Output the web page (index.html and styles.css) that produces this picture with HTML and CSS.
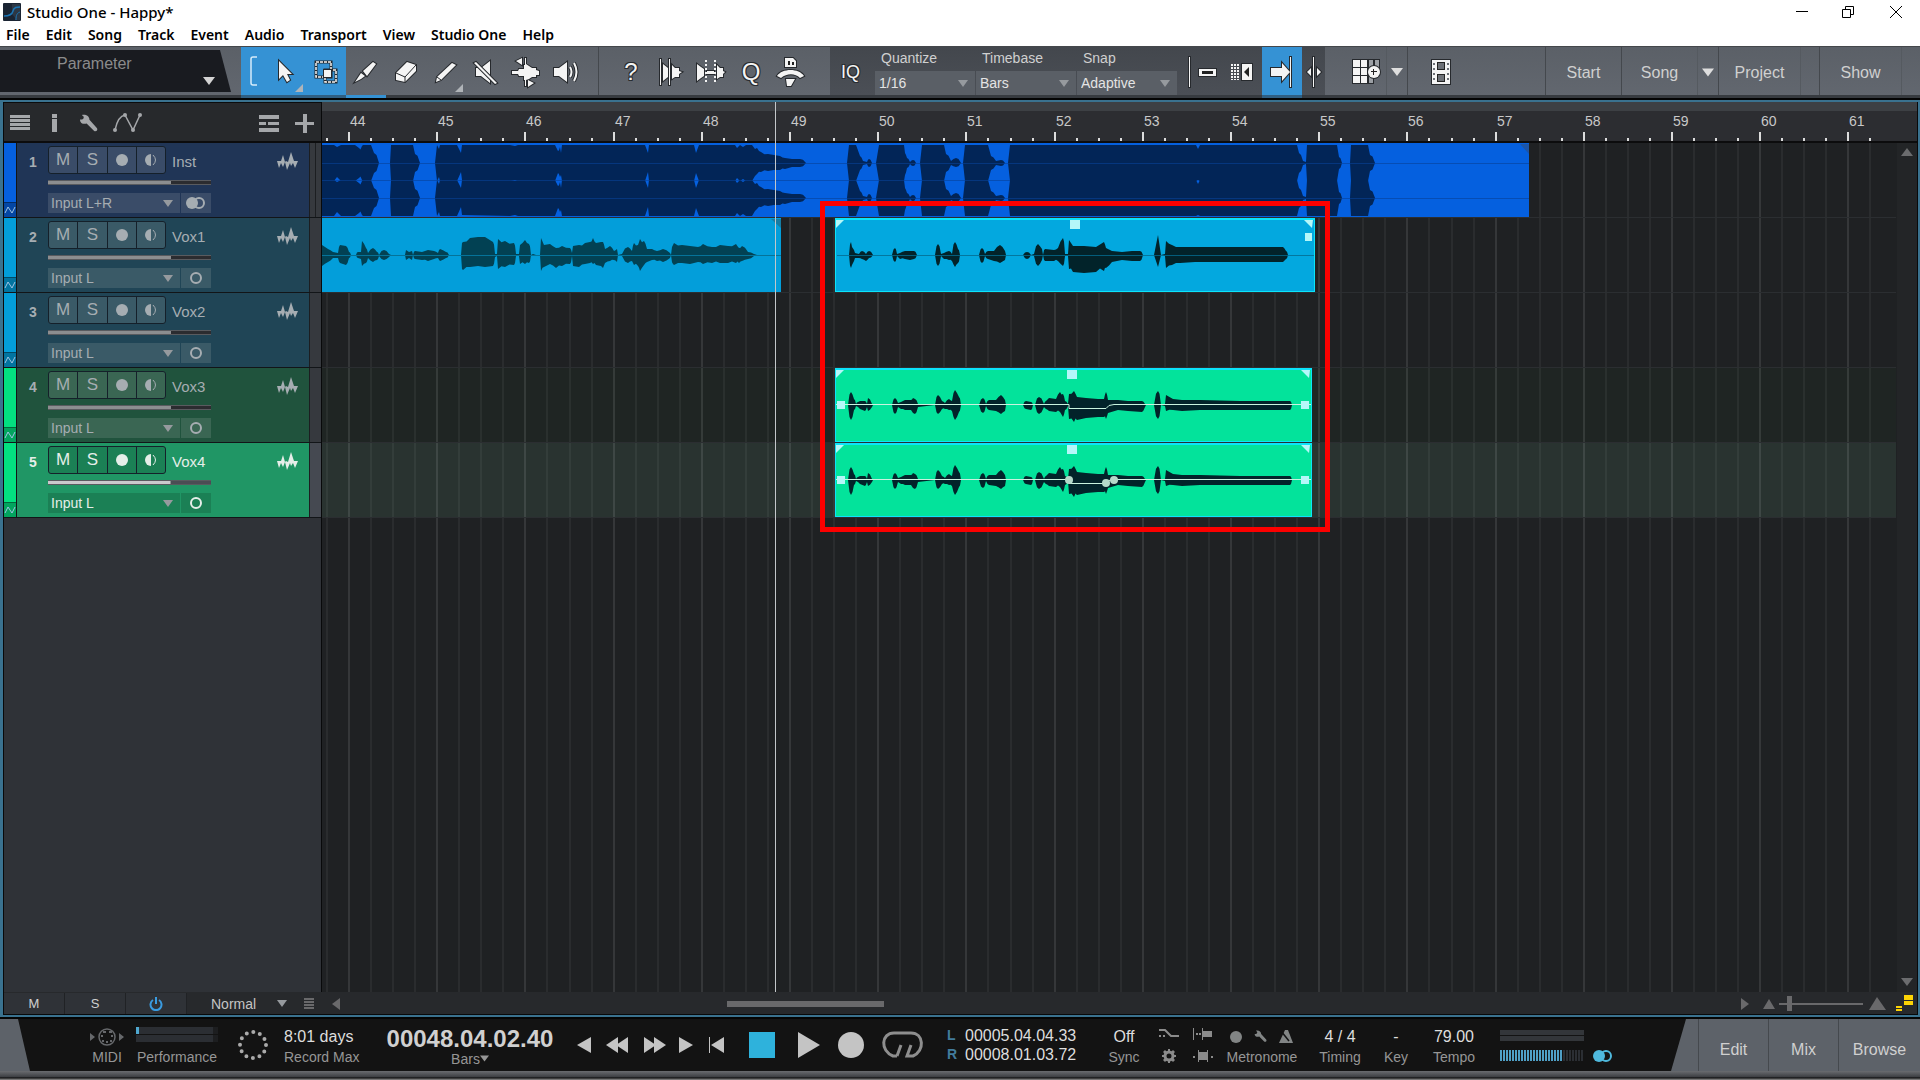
FILE: index.html
```html
<!DOCTYPE html>
<html lang="en">
<head>
    <meta charset="UTF-8">
    <meta name="viewport" content="width=device-width, initial-scale=1.0">
    <title>Studio One - Happy*</title>
    <link rel="stylesheet" href="styles.css">
</head>
<body>

    <!-- Shared icons -->
    <svg class="symbols" aria-hidden="true">
        <symbol id="down" viewBox="0 0 12 8"><path d="M0 0h12L6 8z"/></symbol>
        <symbol id="left" viewBox="0 0 8 12"><path d="M8 0v12L0 6z"/></symbol>
        <symbol id="wrench" viewBox="0 0 20 20"><path d="M1 6c2 0 4 0 4-3L3 1c4-1 8 1 8 5l8 9c1 2-1 4-3 3l-8-8C5 11 1 10 1 6z"/></symbol>
        <symbol id="wave" viewBox="0 0 21 18"><path d="M0 9h4l2-6 2 7 1-1 2 1 3-10 3 9h4l-3 7-2-5-2 3-1-3-3 7-2-8-2 5-2-4-2 5z"/></symbol>
        <symbol id="auto" viewBox="0 0 12 10"><path d="M1 8l3-6 4 6 3-6" fill="none" stroke="currentColor"/></symbol>
    </svg>

    <!-- Window title and menu -->
    <header class="window-bar">
        <div class="title-row">
            <svg class="logo" viewBox="0 0 18 18"><rect width="18" height="18" rx="1" fill="#1a2433"/><path d="M9 1h8v16h-5c1-3-2-4-3-6z" fill="#2c3745"/><path d="M1 13c5 0 8-1 9-5s4-4 7-4" fill="none" stroke="#1b75b5" stroke-width="1.500"/><path d="M13 17c0-5 1-7 4-8" fill="none" stroke="#1b75b5"/></svg>
            <span class="title">Studio One - Happy*</span>
            <div class="window-buttons">
                <button aria-label="Minimize"><svg width="12" height="12"><path d="M0 5.500h12"/></svg></button>
                <button aria-label="Restore"><svg width="12" height="12"><path d="M.5 3.500h8v8h-8zM3.500 3V.5h8v8H9"/></svg></button>
                <button aria-label="Close"><svg width="12" height="12"><path d="M0 0l12 12M12 0L0 12"/></svg></button>
            </div>
        </div>
        <nav class="menu">
            <a href="#">File</a><a href="#">Edit</a><a href="#">Song</a><a href="#">Track</a><a href="#">Event</a><a href="#">Audio</a><a href="#">Transport</a><a href="#">View</a><a href="#">Studio One</a><a href="#">Help</a>
        </nav>
    </header>

    <!-- Toolbar -->
    <div class="toolbar">
        <button class="parameter"><span>Parameter</span><svg width="12" height="8"><use href="#down"/></svg></button>

        <div class="tools">
            <span class="bracket on"><svg width="8" height="30" viewBox="0 0 8 30"><path d="M7 1H3Q1 1 1 3v24q0 2 2 2h4" fill="none" stroke="#d6ecfa" stroke-width="1.500"/></svg></span>
            <button class="tool on corner" aria-label="Arrow"><svg width="16" height="24" viewBox="0 0 16 24"><path d="M1 1v18l4-4 4 7 3-2-3-6h5z"/></svg></button>
            <button class="tool on" aria-label="Range"><svg width="24" height="24" viewBox="0 0 24 24"><path d="M2 2h15v15H2zM11 10h11v12H11z" fill="none" stroke="#26292d" stroke-width="3"/><path d="M2 2h15v15H2zM11 10h11v12H11z" fill="none" stroke="#f4f4f4" stroke-width="1.500" stroke-dasharray="3 1"/><path d="M10 10h7v7h-7z"/></svg></button>
            <button class="tool marked" aria-label="Split"><svg width="24" height="24" viewBox="0 0 24 24"><path d="M1 22l6-9 4 3-4 3zM9 11L19 2l3 2-9 12z"/></svg></button>
            <button class="tool" aria-label="Eraser"><svg width="24" height="24" viewBox="0 0 24 24"><path d="M2 13L13 2l9 3v6L11 22l-9-2z"/><path d="M2 13l9 4v5M11 17L22 5" fill="none" stroke="#26292d" stroke-width="1"/></svg></button>
            <button class="tool corner" aria-label="Paint"><svg width="24" height="24" viewBox="0 0 24 24"><path d="M2 22l1-5L18 3l4 2L7 20z"/><path d="M3 17l4 3" fill="none" stroke="#26292d" stroke-width="1"/></svg></button>
            <button class="tool" aria-label="Mute"><svg width="24" height="24" viewBox="0 0 24 24"><path d="M2 8h5l9-7v22l-9-7H2z"/><path d="M2 2L23 23l-2 1L0 3z"/></svg></button>
            <button class="tool" aria-label="Bend"><svg width="30" height="30" viewBox="0 0 30 30"><path d="M1 14h6l1-2h5V8h1v15h-1v-4H8l-1-2H1zM15 7l3 2 3 2h4v2l3 1v4h-3v2h-4l-3 2-3 1zM14 1h1v28h-1zM11 1v7L5 4zM17 23v7l6-4z"/></svg></button>
            <button class="tool" aria-label="Listen"><svg width="26" height="24" viewBox="0 0 26 24"><path d="M1 8h5l8-6v20l-8-6H1z"/><path d="M17 7q3 5 0 10M21 3q5 9 0 18" fill="none" stroke="#26292d" stroke-width="4"/><path d="M17 7q3 5 0 10M21 3q5 9 0 18" fill="none" stroke="#f4f4f4" stroke-width="2"/></svg></button>
        </div>

        <div class="tools editing">
            <button class="tool glyph">?</button>
            <button class="tool" aria-label="Transients"><svg width="24" height="28" viewBox="0 0 24 28"><path d="M1 1h1v26H1zM4 6l5 4v9l-5 4zM10 1h1v26h-1zM13 7l3 3h4v3l3 1-3 2v3h-4l-3 2z"/></svg></button>
            <button class="tool" aria-label="Bend markers"><svg width="30" height="26" viewBox="0 0 30 26"><path d="M1 5l4 3 3 2v7l-3 2-4 3zM11 12h7v3h-7zM21 6l3 3h3v3l2 1-2 2v3h-3l-3 2z"/><path class="line" stroke-dasharray="2 2" d="M10 1v24M19 1v24"/></svg></button>
            <button class="tool glyph">Q</button>
            <button class="tool" aria-label="Macro"><svg width="30" height="30" viewBox="0 0 30 30"><path d="M9 1h8l3 3v6H9zM1 19c5-8 22-8 27 0l-4 2c-5-5-13-5-19 0zM10 22h9l-4 7h-4z"/><path d="M12 4h2v4h-2zM16 5h2v3h-2z" fill="#222"/></svg></button>
        </div>

        <div class="timing">
            <button class="tool glyph iq">IQ</button>
            <div class="field"><label for="quantize">Quantize</label><select id="quantize"><option>1/16</option></select></div>
            <div class="field"><label for="timebase">Timebase</label><select id="timebase"><option>Bars</option></select></div>
            <div class="field"><label for="snap">Snap</label><select id="snap"><option>Adaptive</option></select></div>
            <button class="tool wide" aria-label="Snap to grid"><svg width="30" height="30" viewBox="0 0 30 30"><path d="M4 0h1v30H4zM14 12h17v7H14z"/><path d="M17 14h11v3H17z" fill="#222"/></svg></button>
            <button class="tool" aria-label="Ripple"><svg width="24" height="18" viewBox="0 0 24 18"><path class="line" stroke-dasharray="2 1" d="M2 1v16M5 1v16M8 1v16"/><path d="M12 1h10v16H12z"/><path d="M19 4v10l-5-5z" fill="#222"/></svg></button>
            <button class="tool on" aria-label="Autoscroll"><svg width="24" height="30" viewBox="0 0 24 30"><path d="M1 11h11V6l8 9-8 9v-5H1zM20 0h1v30h-1z"/></svg></button>
            <button class="tool narrow" aria-label="Cursor follow"><svg width="16" height="30" viewBox="0 0 16 30"><path d="M7 0h1v30H7zM5 11v8l-4-4zM11 11v8l4-4z"/></svg></button>
        </div>

        <button class="tool pads" aria-label="Pads"><svg width="30" height="26" viewBox="0 0 30 26"><path d="M2 1h7v7H2zM10 1h6v7h-6zM2 9h7v7H2zM10 9h6v7h-6zM2 17h7v7H2zM10 17h6v7h-6z"/><path d="M18 1h4v7h-4zM24 1h4v7h-4zM18 17h4v7h-4z" fill="#9ca0a5"/><circle cx="23" cy="13" r="6"/><path d="M20 12h6v1h-6zM22 10h1v6h-1z" fill="#222"/></svg></button>
        <button class="drop" aria-label="Pads menu"><svg width="12" height="8"><use href="#down"/></svg></button>
        <button class="tool film" aria-label="Video"><svg width="20" height="26" viewBox="0 0 20 26"><path d="M1 1h18v24H1z"/><path d="M6 3h8v8H6zM6 15h8v8H6z" fill="#222"/><path d="M7 4h6v6H7zM7 16h6v6H7zM2 4h2v2H2zM2 9h2v2H2zM2 14h2v2H2zM2 19h2v2H2zM16 4h2v2h-2zM16 9h2v2h-2zM16 14h2v2h-2zM16 19h2v2h-2z" class="hole"/></svg></button>

        <nav class="pages">
            <a href="#">Start</a>
            <a href="#">Song</a>
            <button class="drop" aria-label="Open songs"><svg width="12" height="9"><use href="#down"/></svg></button>
            <a href="#" class="page-wide">Project</a>
            <span class="blank"></span>
            <a href="#" class="page-wide">Show</a>
            <span class="blank"></span>
        </nav>
    </div>

    <!-- Song window -->
    <main class="workspace">
        <div class="song">
            <section class="track-list">
                <div class="list-header">
                    <button aria-label="Track list"><svg width="20" height="16"><path d="M0 0h20v3H0zM0 4h20v3H0zM0 8h20v3H0zM0 12h20v3H0z"/></svg></button>
                    <button aria-label="Inspector"><svg width="5" height="18"><path d="M0 0h5v4H0zM0 5h5v13H0z"/></svg></button>
                    <button aria-label="Options"><svg width="19" height="19"><use href="#wrench"/></svg></button>
                    <button aria-label="Automation"><svg width="30" height="20" viewBox="0 0 30 20"><path d="M2 17Q5 3 12 2l8 15 7-15" fill="none" stroke="#a5a7aa" stroke-width="1.500"/><circle cx="2" cy="17" r="2"/><circle cx="12" cy="2" r="2"/><circle cx="20" cy="17" r="2"/><circle cx="27" cy="2" r="2"/></svg></button>
                    <button class="push" aria-label="Track groups"><svg width="20" height="17"><path d="M0 0h20v4H0zM0 7h7v3H0zM9 7h11v3H9zM0 13h20v4H0z"/></svg></button>
                    <button aria-label="Add track"><svg width="19" height="19"><path d="M8 0h4v8h7v3h-7v8H8v-8H0V8h8z"/></svg></button>
                </div>
                <div id="tracks"></div>
            </section>
            <svg id="arrange" class="arrange" role="img" aria-label="Arrangement"></svg>
            <div class="v-scroll">
                <svg width="12" height="8" class="flip"><use href="#down"/></svg>
                <svg width="12" height="8"><use href="#down"/></svg>
            </div>
        </div>

        <div class="song-footer">
            <button class="cell">M</button>
            <button class="cell">S</button>
            <button class="cell power" aria-label="Power"><svg width="14" height="14" viewBox="0 0 14 14"><path d="M4 3a5.500 5.500 0 1 0 6 0M7 0v7" fill="none" stroke="#3a9be0" stroke-width="2"/></svg></button>
            <select aria-label="Track height"><option>Normal</option></select>
            <svg width="10" height="12" class="dim"><path d="M0 0h10v2H0zM0 3h10v2H0zM0 6h10v2H0zM0 9h10v2H0z"/></svg>
            <svg width="8" height="12" class="dim"><use href="#left"/></svg>
            <div class="h-scroll"><span></span></div>
            <svg width="8" height="12" class="dim mirror"><use href="#left"/></svg>
            <svg width="12" height="10" class="dim"><path d="M6 0l6 10H0z"/></svg>
            <input type="range" class="zoom" aria-label="Zoom" min="0" max="100" value="10">
            <svg width="17" height="13" class="dim"><path d="M8 0l9 13H0z"/></svg>
            <svg width="17" height="17" class="view-icon"><path d="M8 0h9v5H8zM8 6h9v4H8zM0 11h6v2H0zM0 14h6v2H0z"/></svg>
        </div>
    </main>

    <!-- Transport -->
    <footer class="transport">
        <div class="deck">
            <div class="stack midi">
                <svg width="34" height="18" viewBox="0 0 34 18"><path d="M0 5l5 4-5 4zM29 5l5 4-5 4z"/><circle cx="17" cy="9" r="8" fill="none" stroke="#66686b" stroke-width="1.500"/><path d="M13 3h3v2h-3zM19 3h3v2h-3zM11 7h2v2h-2zM21 7h2v2h-2zM12 12h2v2h-2zM16 13h2v2h-2zM20 12h2v2h-2z"/></svg>
                <span>MIDI</span>
            </div>
            <div class="stack performance">
                <div class="bars"><i><b></b></i><i></i></div>
                <span>Performance</span>
            </div>
            <svg class="dots" width="30" height="30" viewBox="0 0 30 30"><circle cx="15" cy="15" r="13"/></svg>
            <div class="stack record"><strong>8:01 days</strong><span>Record Max</span></div>
            <div class="stack clock"><b>00048.04.02.40</b><span>Bars<svg width="9" height="7"><use href="#down"/></svg></span></div>

            <div class="controls">
                <button class="w28" aria-label="Previous marker"><svg width="14" height="16" viewBox="0 0 14 16"><path d="M14 0v16L0 8z"/></svg></button>
                <button class="w38" aria-label="Rewind"><svg width="22" height="16" viewBox="0 0 22 16"><path d="M12 0v16L0 8zM22 0v16L10 8z"/></svg></button>
                <button class="w38" aria-label="Forward"><svg width="22" height="16" viewBox="0 0 22 16"><path d="M0 0v16l12-8zM10 0v16l12-8z"/></svg></button>
                <button class="w24" aria-label="Next marker"><svg width="14" height="16" viewBox="0 0 14 16"><path d="M0 0v16l14-8z"/></svg></button>
                <button class="w38" aria-label="Return to zero"><svg width="16" height="16" viewBox="0 0 16 16"><path d="M0 0h1v16H0zM15 0v16L2 8z"/></svg></button>
                <button class="w52 stop" aria-label="Stop"><svg width="26" height="26"><path d="M0 0h26v26H0z"/></svg></button>
                <button class="w42" aria-label="Play"><svg width="22" height="26"><path d="M0 0v26l22-13z"/></svg></button>
                <button class="w42" aria-label="Record"><svg width="26" height="26"><circle cx="13" cy="13" r="13"/></svg></button>
                <button class="w62" aria-label="Loop"><svg width="42" height="28" viewBox="0 0 42 28"><path d="M15 25H11C-2 20-1 2 12 2h17c13 0 14 18 2 23h-6l4-11M15 25l4-11" fill="none" stroke="#8e8e8e" stroke-width="3"/></svg></button>
            </div>

            <div class="locators">
                <b>L</b><span>00005.04.04.33</span>
                <b>R</b><span>00008.01.03.72</span>
            </div>
            <div class="stack sync"><strong>Off</strong><span>Sync</span></div>
            <div class="options">
                <svg width="20" height="12" viewBox="0 0 20 12"><path d="M0 2h6l6 6h8M0 8h2M4 8h2" fill="none" stroke="#8b8b8b" stroke-width="2"/></svg>
                <svg width="20" height="12" viewBox="0 0 20 12"><path d="M0 0h1v12H0zM3 5h2v2H3zM6 5h2v2H6zM9 0h1v3h9v6h-9v3H9z"/></svg>
                <svg width="14" height="14" viewBox="0 0 14 14"><circle cx="7" cy="7" r="4" fill="none" stroke="#8b8b8b" stroke-width="3"/><path d="M6 0h2v3H6zM6 11h2v3H6zM0 6h3v2H0zM11 6h3v2h-3zM1 3l2-2 2 2-2 2zM9 3l2-2 2 2-2 2zM1 11l2 2 2-2-2-2zM9 11l2 2 2-2-2-2z"/></svg>
                <svg width="20" height="12" viewBox="0 0 20 12"><path d="M0 6h2v2H0zM5 0h1v2h8V0h1v12h-1v-2H6v2H5zM18 6h2v2h-2z"/></svg>
            </div>
            <div class="stack metronome">
                <div class="icons">
                    <svg width="12" height="12"><circle cx="6" cy="6" r="6"/></svg>
                    <svg width="13" height="13"><use href="#wrench"/></svg>
                    <svg width="15" height="13" viewBox="0 0 15 13"><path d="M6 0h3l5 13H0z"/><path d="M2 1l8 10" stroke="#121213" stroke-width="1.500"/></svg>
                </div>
                <span>Metronome</span>
            </div>
            <div class="stack signature"><strong>4 / 4</strong><span>Timing</span></div>
            <div class="stack key"><strong>-</strong><span>Key</span></div>
            <div class="stack tempo"><strong>79.00</strong><span>Tempo</span></div>
            <div class="meters">
                <div class="bars"><i></i><i></i></div>
                <div class="level"></div>
            </div>
            <svg class="stereo" width="22" height="14" viewBox="0 0 22 14"><circle cx="7" cy="7" r="6"/><circle cx="14" cy="7" r="5" fill="none" stroke="#4fb9dd" stroke-width="2"/></svg>
        </div>
        <nav class="views"><a href="#">Edit</a><a href="#">Mix</a><a href="#">Browse</a></nav>
    </footer>

    <script src="song.js"></script>
</body>
</html>
```

FILE: song.js
```javascript
const tracks = [
    { name: 'Inst', color: 'blue', input: 'Input L+R' },
    { name: 'Vox1', color: 'cyan', input: 'Input L' },
    { name: 'Vox2', color: 'cyan', input: 'Input L' },
    { name: 'Vox3', color: 'green', input: 'Input L' },
    { name: 'Vox4', color: 'green selected', input: 'Input L' }
];

// Track headers
document.getElementById('tracks').innerHTML = tracks.map(function (t, i) {
    const ring = t.input === 'Input L+R'
        ? '<svg width="22" height="12"><circle cx="7" cy="6" r="6"/><circle cx="14" cy="6" r="5" class="ring"/></svg>'
        : '<svg width="12" height="12"><circle cx="6" cy="6" r="5" class="ring"/></svg>';
    return `
    <div class="track ${t.color}">
        <div class="strip"><svg width="12" height="10"><use href="#auto"/></svg></div>
        <div class="track-body">
            <span class="number">${i + 1}</span>
            <div class="track-controls">
                <div class="top">
                    <div class="buttons">
                        <button>M</button><button>S</button>
                        <button aria-label="Record"><svg width="12" height="12"><circle cx="6" cy="6" r="6"/></svg></button>
                        <button aria-label="Monitor"><svg width="12" height="12"><path d="M6 0v12A6 6 0 0 1 6 0z"/><path d="M8 1q5 5 0 10" class="arc"/></svg></button>
                    </div>
                    <span class="name">${t.name}</span>
                </div>
                <input type="range" class="fader" aria-label="${t.name} volume" min="0" max="100" value="75">
                <div class="input-row">
                    <select aria-label="${t.name} input"><option>${t.input}</option></select>
                    <button aria-label="Channels">${ring}</button>
                </div>
            </div>
            <svg class="wave-icon" width="21" height="18"><use href="#wave"/></svg>
        </div>
        <div class="meter"></div>
    </div>`;
}).join('');

// Arrangement: song pixels, scrolled so that the view starts at viewX
const viewX = 322, viewY = 102;
const barOrigin = 349, barWidth = 88.2, firstBar = 44;
const rowTop = 143, rowHeight = 75;

// Each envelope is x, up, down, x, up, down ...
// Steep rises and falls get a rounded shoulder
function envelope(points, mid) {
    let top = '', bottom = '';
    for (let i = 0; i < points.length; i += 3) {
        const [x, up, down, x2, up2, down2] = points.slice(i, i + 6);
        top += `${x},${mid - up} `;
        bottom = `${x},${mid + down} ` + bottom;
        if (x2 - x > 1 && Math.abs(up2 - up) > 1 && Math.max(up, up2) < 18) {
            const mx = (x + x2) / 2;
            top += `${mx},${mid - Math.max(up, up2) * 0.8} `;
            bottom = `${mx},${mid + Math.max(down, down2) * 0.8} ` + bottom;
        }
    }
    return `<polygon points="${top}${bottom}"/>`;
}

const inst = [322,18,18,334,18,18,337,16,14,341,18,18,355,18,18,359,15,15,362,17,17,363,18,18,371,18,18,374,10,10,379,0,0,
    390,0,0,391,18,18,413,18,18,415,9,9,420,0,0,435,0,0,437,18,18,439,14,14,440,18,18,457,18,18,461,10,9,462,18,17,
    510,18,18,515,17,17,518,18,18,555,18,18,558,12,10,560,16,14,561,10,12,562,18,18,645,18,18,648,10,9,649,18,18,
    694,18,18,696,10,10,699,18,18,735,18,18,737,15,15,740,18,18,743,16,16,746,18,18,752,18,18,755,14,13,757,15,11,761,11,9,768,9,8,
    774,8,7,780,7,7,785,5,6,792,4,4,800,4,4,806,0,0,847,0,0,849,18,18,856,18,18,860,7,7,863,2,2,867,1,1,869,4,4,872,0,0,
    876,0,0,879,18,18,904,18,18,905,10,12,907,5,5,910,1,1,913,3,3,916,0,0,920,0,0,922,18,18,944,18,18,946,9,9,951,2,2,956,5,4,961,0,0,
    963,0,0,965,18,18,988,18,18,991,7,7,996,2,2,1001,3,3,1005,0,0,1008,0,0,1010,18,18,1196,18,18,1198,14,17,1200,18,18,
    1297,18,18,1299,10,10,1303,2,2,1306,1,1,1307,18,18,1337,18,18,1339,6,6,1342,0,0,1350,0,0,1351,18,18,1368,18,18,1370,8,8,1375,0,0];

const vox1a = [322,10,11,328,6,7,333,3,3,338,2,3,340,10,8,346,9,10,349,3,3,351,0,0,356,0,0,358,3,3,361,3,4,362,14,11,366,7,8,368,2,3,
    373,7,7,377,3,5,379,0,1,384,5,5,389,1,2,391,0,0,405,0,0,406,5,5,409,3,3,412,4,5,413,0,0,415,4,4,422,3,5,428,5,6,434,4,4,438,2,3,
    440,6,6,446,3,3,449,0,0,461,0,0,462,12,14,463,13,15,470,17,12,478,18,11,485,18,12,493,13,11,495,1,2,497,1,1,498,16,14,505,14,12,514,12,10,516,1,1,
    519,1,1,520,10,9,525,15,9,529,11,8,531,0,0,533,1,0,536,0,1,540,0,0,541,17,16,544,10,12,550,11,9,556,7,13,562,9,11,570,7,9,572,2,1,
    573,9,11,579,10,12,585,12,9,590,13,8,593,17,9,596,12,10,601,13,11,603,13,13,605,6,8,610,9,6,614,4,5,617,6,7,618,0,0,622,1,1,628,8,8,
    632,4,6,634,12,10,638,10,11,640,16,16,644,14,10,647,6,7,652,6,5,657,4,6,663,6,7,670,2,3,671,0,0,673,10,9,674,12,10,682,10,8,690,9,9,
    698,8,7,703,11,9,712,8,8,720,10,8,728,9,8,736,11,8,739,7,8,742,9,6,748,3,4,754,1,1,757,0,0];

const vox1b = [849,0,0,851,18,18,852,12,14,854,7,8,855,3,4,859,2,4,862,5,5,866,2,8,869,5,4,873,0,0,892,0,0,895,10,10,897,1,2,900,3,5,905,5,5,
    910,5,7,914,5,6,917,0,0,935,0,0,938,15,16,941,2,2,944,3,5,949,6,7,952,2,8,955,18,17,958,9,11,960,0,0,979,0,0,982,10,11,985,1,1,
    988,5,6,994,5,8,1000,14,12,1005,5,7,1006,0,0,1023,0,0,1027,4,6,1031,0,0,1034,1,1,1038,16,16,1042,8,7,1043,0,0,1045,8,9,1054,7,8,
    1058,10,8,1063,24,16,1065,2,2,1068,1,1,1069,21,20,1073,13,24,1084,13,25,1096,12,24,1104,18,23,1106,10,18,1112,6,10,1122,4,7,1132,6,9,
    1140,5,8,1143,0,0,1154,0,0,1158,28,17,1161,0,0,1165,1,1,1166,20,19,1172,14,14,1180,11,11,1195,11,10,1230,11,10,1283,11,10,1286,6,6,1288,0,0]
    .map((n, i) => i % 3 ? Math.round(n * 0.7) : n);

const harmony = [848,0,0,851,13,15,854,6,5,856,1,1,858,3,2,860,4,4,865,4,6,867,1,2,868,7,6,872,1,2,873,0,0,892,0,0,895,7,9,898,2,2,
    901,3,4,905,5,5,911,5,5,913,7,8,915,6,9,918,1,2,935,0,0,938,10,9,942,4,4,945,2,4,949,6,5,952,4,6,955,15,15,959,8,7,961,0,0,
    979,0,0,983,7,8,986,1,1,989,5,5,996,5,6,1001,10,9,1005,5,6,1006,0,0,1023,0,0,1026,4,4,1031,3,5,1033,0,0,1035,0,0,1039,8,9,1044,1,2,
    1046,4,4,1049,7,6,1056,6,7,1060,13,7,1063,11,12,1065,4,5,1068,1,1,1069,11,14,1074,14,17,1077,8,15,1086,7,13,1098,6,12,1104,6,12,
    1106,13,14,1108,5,8,1118,5,5,1128,4,6,1142,4,7,1145,1,2,1146,0,0,1154,0,0,1158,14,14,1161,0,0,1165,1,1,1166,10,6,1173,6,5,1182,5,6,
    1200,5,5,1240,4,5,1290,4,5,1292,0,0];

let svg = '<rect x="322" y="102" width="2400" height="9" fill="#3d4044"/><rect x="322" y="111" width="2400" height="31" fill="#2c2d31"/>';
svg += '<rect x="322" y="368" width="1574" height="74" fill="#1f2523"/><rect x="322" y="443" width="1574" height="75" fill="#293330"/>';

// Beat grid, ruler ticks and bar numbers
for (let q = -1; q < 70; q++) {
    const x = Math.round(barOrigin + q * barWidth / 4);
    const bar = q % 4 === 0;
    svg += `<rect x="${x - 1}" y="143" width="2" height="2000" fill="${bar ? '#ffffff1a' : '#ffffff0d'}"/>`;
    svg += `<rect x="${x - 1}" y="${bar ? 132 : 138}" width="2" height="${bar ? 10 : 4}" fill="#dcdcdc"/>`;
    if (bar) svg += `<text x="${x + 1}" y="126">${firstBar + q / 4}</text>`;
}
svg += '<rect x="322" y="141" width="2400" height="2" fill="#0c0c0d"/>';
for (let r = 1; r < 6; r++) svg += `<rect x="322" y="${rowTop + r * rowHeight - 1}" width="1574" height="1" fill="#2b2e31"/>`;

// Clips
svg += '<rect x="322" y="143" width="1207" height="74" fill="#0560df"/><path d="M1520 144h9v10z" fill="#1c55a8"/><g fill="#022557">'
    + envelope(inst, 163) + envelope(inst, 198) + '</g><path d="M322 163.500h1207M322 198.500h1207M322 180.500h688" stroke="#074299" opacity="0.6"/>';
svg += '<rect x="322" y="218" width="459" height="74" fill="#039eda"/><path d="M771 219h10v9z" fill="#167ca3"/><g fill="#024153">' + envelope(vox1a, 255) + '</g><path d="M322 255.500h459" stroke="#057399"/>';

function selectedClip(x, row, width, fill, points, mid) {
    const y = rowTop + row * rowHeight;
    return `<rect x="${x}" y="${y}" width="${width}" height="74" fill="${fill}"/>
        <g fill="#02232a">${envelope(points, mid)}</g>
        <rect x="${x}.5" y="${y}.5" width="${width - 1}" height="73" fill="none" stroke="#0be4fa"/>
        <rect x="${x}" y="${y}" width="${width}" height="2" fill="#0be4fa"/>
        <path d="M${x + 1} ${y + 2}h8l-8 8zM${x + width - 2} ${y + 2}h-9l8 8z" fill="#b5f7f9"/>`;
}
svg += selectedClip(835, 1, 480, '#03a8df', vox1b, 255)
    + '<path d="M837 255.500h477" stroke="#046c90" opacity="0.8"/><path d="M1070 220h10v9h-10zM1305 233h7v8h-7z" fill="#b5f7f9"/>';
[3, 4].forEach(function (row) {
    const y = rowTop + row * rowHeight;
    svg += selectedClip(835, row, 477, '#03e39b', harmony, y + 37);
    svg += `<path d="M836 ${y + 36}.500H1069V${y + 40}.500H1106Q1108 ${y + 36}.500 1114 ${y + 36}.500H1311" fill="none" stroke="#c9f3df"/>
        <path d="M1067 ${y + 2}h10v9h-10zM837 ${y + 33}h8v8h-8zM1301 ${y + 33}h8v8h-8z" fill="#b5f7f9"/>`;
});
svg += '<g fill="#b5d9ca"><circle cx="1069" cy="480" r="4"/><circle cx="1106" cy="483" r="4"/><circle cx="1114" cy="480" r="4"/></g>';

// Highlight box and playhead
svg += '<rect x="822.5" y="203.5" width="505" height="326" fill="none" stroke="#fc0000" stroke-width="5"/>';
svg += '<rect x="775" y="102" width="1" height="2000" fill="#c3c7ca"/>';

document.getElementById('arrange').innerHTML = `<g transform="translate(${-viewX} ${-viewY})">${svg}</g>`;
```

FILE: styles.css
```css
* {
    box-sizing: border-box;
}

body {
    display: flex;
    flex-direction: column;
    height: 100vh;
    margin: 0;
    overflow: hidden;
    background: #050505;
    color: #d0d0d0;
    font-family: "Liberation Sans", Arial, sans-serif;
    font-size: 14px;
}

button, select {
    margin: 0;
    padding: 0;
    border: 0;
    border-radius: 0;
    background: none;
    color: inherit;
    font: inherit;
}

button {
    display: flex;
    align-items: center;
    justify-content: center;
}

a {
    color: inherit;
    text-decoration: none;
}

svg {
    display: block;
    flex: none;
    fill: currentColor;
}

.symbols {
    position: absolute;
    width: 0;
    height: 0;
}

select {
    appearance: none;
    background: url("data:image/svg+xml,%3Csvg xmlns='http://www.w3.org/2000/svg' width='10' height='7'%3E%3Cpath d='M0 0h10L5 7z' fill='%23969a9e'/%3E%3C/svg%3E") no-repeat right 7px center;
}

/* Window bar */
.window-bar {
    height: 46px;
    background: #fff;
    color: #000;
    font-family: "Noto Sans", "Noto Sans CJK KR", sans-serif;
}

.title-row {
    display: flex;
    align-items: center;
    height: 23px;
    padding-left: 3px;
}

.logo {
    width: 18px;
    height: 18px;
}

.title {
    margin-left: 6px;
    font-size: 15px;
    font-weight: 500;
}

.window-buttons {
    display: flex;
    margin-left: auto;
}

.window-buttons button {
    width: 46px;
}

.window-buttons button:last-child {
    width: 49px;
}

.window-buttons svg {
    fill: none;
    stroke: #000;
}

.menu {
    display: flex;
    gap: 16px;
    padding-left: 6px;
    font-size: 14px;
    font-weight: 600;
    line-height: 23px;
}

/* Toolbar */
.toolbar {
    display: flex;
    flex: none;
    height: 52px;
    border-top: 1px solid #44474b;
    border-bottom: 3px solid #373b40;
    background: linear-gradient(#5b6067, #62676f);
}

.parameter {
    align-items: flex-start;
    justify-content: flex-start;
    width: 231px;
    height: 42px;
    margin: 3px 10px 0 0;
    padding: 5px 16px 0 57px;
    background: #191b20;
    clip-path: polygon(0 0, 220px 0, 100% 100%, 0 100%);
    color: #8b8b8c;
    font-size: 16px;
}

.parameter svg {
    margin: 22px 0 0 auto;
    color: #d4d4d4;
}

.tools {
    display: flex;
    width: 358px;
    border-right: 1px solid #44484d;
}

.tools.editing {
    width: 231px;
    padding-left: 12px;
    border: 0;
}

.bracket {
    display: flex;
    align-items: center;
    width: 25px;
    padding-left: 9px;
}

.tool {
    position: relative;
    width: 40px;
    padding-top: 2px;
}

.tool svg {
    overflow: visible;
    fill: #f4f4f4;
    stroke: #26292d;
    stroke-width: 2px;
    paint-order: stroke;
}

.tool svg [fill="#222"] {
    stroke: none;
}

.tool svg .line {
    fill: none;
    stroke: #f4f4f4;
}

.tool svg .hole {
    fill: #6c7076;
    stroke: none;
}

.on {
    background: #3592d4;
    box-shadow: 0 3px #2f5f83;
}

.marked {
    box-shadow: 0 3px #3592d4;
}

.corner::after {
    content: "";
    position: absolute;
    right: 3px;
    bottom: 3px;
    border-bottom: 8px solid #b0b4b8;
    border-left: 8px solid transparent;
}

.glyph {
    color: #f4f4f4;
    font-size: 24px;
    text-shadow: 1px 1px #292c30, -1px -1px #292c30, 1px -1px #292c30, -1px 1px #292c30;
}

.timing {
    display: flex;
    width: 495px;
    background: linear-gradient(#43474d, #4b4f56);
}

.timing .iq {
    width: 45px;
    padding-right: 4px;
    font-size: 18px;
}

.field {
    display: flex;
    flex-direction: column;
    width: 101px;
    padding-right: 1px;
}

.field label {
    height: 24px;
    padding-left: 6px;
    line-height: 22px;
}

.field select {
    height: 24px;
    padding-left: 4px;
    background-color: #5a5f66;
    color: #e4e4e4;
}

.timing .wide {
    width: 44px;
}

.timing .narrow {
    flex: 1;
}

.pads {
    width: 61px;
    padding-left: 20px;
}

.drop {
    width: 21px;
    padding-top: 2px;
    border-left: 1px solid #555a60;
    color: #dedede;
}

.toolbar > .drop {
    width: 22px;
    border-right: 1px solid #44484d;
}

.film {
    width: 66px;
}

.pages {
    display: flex;
    margin-left: auto;
    font-size: 16px;
}

.pages a {
    width: 76px;
    border-left: 1px solid #44484d;
    line-height: 52px;
    text-align: center;
}

.pages .page-wide {
    width: 82px;
}

.blank {
    width: 19px;
    border-left: 1px solid #555a60;
}

/* Song window */
.workspace {
    display: flex;
    flex: 1;
    flex-direction: column;
    min-height: 0;
    margin: 2px 0;
    padding: 0 1px;
    border: 2px solid #3a728f;
    border-left-width: 3px;
    background: #08090a;
}

.song {
    display: flex;
    flex: 1;
    min-height: 0;
}

.track-list {
    width: 317px;
    margin-right: 1px;
    background: #2f3237;
}

.list-header {
    display: flex;
    align-items: center;
    gap: 22px;
    height: 41px;
    padding: 2px 7px 0 6px;
    border-top: 1px solid #0c0c0d;
    border-bottom: 2px solid #0c0c0d;
    background: #27292c;
    color: #a5a7aa;
}

.list-header button:nth-child(4) {
    margin-left: -7px;
}

.list-header .push {
    margin: 0 -6px 0 auto;
}

.track {
    display: flex;
    height: 75px;
    border-bottom: 1px solid #121518;
    color: #a6adb2;
}

.strip {
    display: flex;
    align-items: flex-end;
    width: 13px;
    border-right: 1px solid #121518;
    background: linear-gradient(transparent 59px, #0008 59px, #0008 60px, #0004 60px) var(--strip);
    color: #9fc4e4;
}

.strip svg {
    margin-bottom: 2px;
}

.blue {
    --strip: #0560df;
    --body: #203556;
    --control: #3a4c68;
}

.cyan {
    --strip: #039eda;
    --body: #204556;
    --control: #3a5a67;
}

.green {
    --strip: #03e080;
    --body: #20533d;
    --control: #3a6653;
}

.selected {
    --body: #209665;
    --control: #1b8055;
    color: #e5eee9;
}

.track-body {
    display: flex;
    width: 292px;
    background: var(--body);
}

.number {
    width: 31px;
    padding: 11px 0 0 12px;
    font-size: 14px;
    font-weight: bold;
}

.track-controls {
    display: flex;
    flex-direction: column;
    width: 180px;
    padding-top: 3px;
}

.top {
    display: flex;
    height: 32px;
}

.buttons {
    display: flex;
    width: 118px;
    height: 28px;
    border: 1px solid #15202a;
    border-radius: 3px;
    background: var(--control);
}

.buttons button {
    flex: 1;
    font-size: 17px;
}

.buttons button + button {
    border-left: 1px solid #15202a;
}

.arc, .ring {
    fill: none;
    stroke: currentColor;
}

.ring {
    stroke-width: 2px;
}

.name {
    padding-left: 6px;
    font-size: 15px;
    line-height: 32px;
}

input[type="range"] {
    appearance: none;
    margin: 0;
    background: none;
}

.track .fader {
    width: 163px;
    height: 5px;
    margin-top: 2px;
}

.fader::-webkit-slider-runnable-track {
    height: 5px;
    border: 1px solid #595b5f;
    border-width: 1px 0;
    background: linear-gradient(90deg, #8c8e90 123px, #2b2c30 123px);
}

.fader::-webkit-slider-thumb {
    appearance: none;
    width: 1px;
    height: 3px;
    background: #8c8e90;
}

.selected .fader::-webkit-slider-runnable-track {
    background: linear-gradient(90deg, #c9cacc 123px, #4b4d54 123px);
}

.input-row {
    display: flex;
    gap: 1px;
    height: 20px;
    margin-top: 8px;
}

.input-row select {
    width: 132px;
    padding-left: 3px;
    background-color: var(--control);
}

.input-row button {
    width: 30px;
    background: var(--control);
}

.wave-icon {
    margin: 9px 0 0 49px;
}

.meter {
    flex: 1;
    border-left: 1px solid #1c1e21;
    background: #36393e;
}

.blue .meter {
    background: linear-gradient(90deg, #36393e 5px, #1c1e21 5px, #1c1e21 6px, #36393e 6px);
}

.selected .meter {
    background: #454951;
}

.arrange {
    flex: 1;
    min-width: 0;
    height: 100%;
    background: #1f2123;
}

.arrange text {
    fill: #c8c8c8;
    font-size: 14px;
}

.v-scroll {
    display: flex;
    flex-direction: column;
    align-items: center;
    justify-content: space-between;
    width: 20px;
    padding: 46px 0 6px;
    background: linear-gradient(#3d4044 9px, #2c2d31 9px, #2c2d31 39px, #0c0c0d 39px, #0c0c0d 41px, #232527 41px);
    color: #6b6c6e;
}

.flip {
    transform: rotate(180deg);
}

.mirror {
    transform: scaleX(-1);
}

/* Song footer */
.song-footer {
    display: flex;
    align-items: center;
    height: 23px;
    padding: 1px 4px 0 0;
    border-bottom: 1px solid #08090a;
    background: #27292c;
}

.song-footer .cell {
    width: 61px;
    height: 100%;
    border-right: 1px solid #202225;
    background: #2f3237;
    font-size: 13px;
}

.song-footer select {
    width: 107px;
    margin-right: 10px;
    padding-left: 24px;
    color: #c4c4c4;
}

.dim {
    margin-right: 14px;
    color: #69696b;
}

.song-footer .dim + .dim {
    margin-left: 4px;
}

.h-scroll {
    display: flex;
    flex: 1;
    justify-content: center;
    padding-right: 484px;
}

.h-scroll span {
    width: 157px;
    height: 6px;
    background: #69696b;
}

.song-footer .mirror {
    margin-right: 10px;
}

.song-footer .mirror + .dim {
    margin-right: 4px;
}

.zoom {
    width: 84px;
    height: 16px;
}

.zoom::-webkit-slider-runnable-track {
    height: 16px;
    background: linear-gradient(transparent 7px, #69696b 7px, #69696b 9px, transparent 9px);
}

.zoom::-webkit-slider-thumb {
    appearance: none;
    width: 5px;
    height: 15px;
    background: #69696b;
}

.song-footer input + .dim {
    margin: 0 10px 0 6px;
}

.view-icon {
    color: #fcd305;
}

/* Transport */
.transport {
    display: flex;
    flex: none;
    height: 61px;
    padding-bottom: 9px;
    background: linear-gradient(transparent 52px, #6a6c70 52px, #3c3e42 58px, #050505 59px, #777 60px), #5d6269;
}

.deck {
    display: flex;
    flex: 1;
    align-items: center;
    margin-right: 12px;
    padding-left: 90px;
    background: #131313;
    clip-path: polygon(18px 0, 100% 0, calc(100% - 15px) 100%, 30px 100%);
}

.stack {
    display: flex;
    flex: none;
    flex-direction: column;
    align-items: center;
    justify-content: center;
    padding-top: 3px;
    white-space: nowrap;
}

.stack > strong {
    color: #dedede;
    font-size: 16px;
    font-weight: normal;
    line-height: 20px;
}

.stack > span {
    color: #969696;
    line-height: 20px;
}

.midi {
    width: 34px;
    padding-top: 6px;
    color: #66686b;
}

.midi span {
    line-height: 22px;
}

.performance {
    width: 82px;
    margin-left: 12px;
}

.performance .bars {
    width: 100%;
    margin-bottom: 4px;
}

.bars i {
    display: block;
    height: 7px;
    margin-bottom: 1px;
    background: linear-gradient(90deg, #2b2e33 94%, #1d1e20 94%);
}

.bars b {
    display: block;
    width: 3px;
    height: 7px;
    background: #4fa8d0;
}

.dots {
    margin-left: 20px;
    fill: none;
    stroke: #aaa;
    stroke-width: 4px;
    stroke-dasharray: 0 6.8;
    stroke-linecap: round;
}

.record {
    align-items: flex-start;
    width: 90px;
    margin-left: 16px;
}

.clock {
    width: 168px;
    margin-left: 12px;
}

.clock b {
    color: #d0d0d0;
    font-size: 24px;
    line-height: 24px;
}

.clock > span {
    display: flex;
    align-items: center;
    line-height: 16px;
}

.controls {
    display: flex;
    margin-left: 16px;
    color: #c4c4c4;
}

.w24 {
    width: 24px;
}

.w28 {
    width: 28px;
}

.w38 {
    width: 38px;
}

.w42 {
    width: 42px;
}

.w52 {
    width: 52px;
}

.w62 {
    width: 62px;
}

.stop {
    color: #2eb2dc;
}

.locators {
    display: grid;
    grid-template-columns: 18px 112px;
    width: 130px;
    margin-left: 13px;
    color: #dedede;
    font-size: 16px;
    line-height: 19px;
}

.locators b {
    color: #427c9c;
    font-size: 14px;
}

.sync {
    width: 42px;
    margin-left: 26px;
}

.options {
    display: grid;
    grid-template-columns: 20px 20px;
    gap: 9px 14px;
    align-items: center;
    justify-items: center;
    width: 54px;
    margin-left: 14px;
    color: #8b8b8b;
}

.metronome {
    width: 70px;
    margin-left: 14px;
}

.icons {
    display: flex;
    align-items: center;
    gap: 12px;
    height: 20px;
    color: #828585;
}

.signature {
    width: 40px;
    margin-left: 23px;
}

.key {
    width: 30px;
    margin-left: 21px;
}

.tempo {
    width: 44px;
    margin-left: 21px;
}

.meters {
    width: 84px;
    margin-left: 24px;
}

.meters .bars i {
    height: 5px;
    background: #33363a;
}

.level {
    height: 11px;
    margin-top: 9px;
    background: repeating-linear-gradient(90deg, transparent 0 2px, #131313 2px 3px), linear-gradient(90deg, #4f9fc6 62px, #2b2e33 62px);
}

.stereo {
    align-self: flex-end;
    margin: 0 0 8px 8px;
    color: #4fb9dd;
}

.views {
    display: flex;
    font-size: 16px;
}

.views a {
    width: 70px;
    border-left: 1px solid #45494e;
    line-height: 62px;
    text-align: center;
}

.views a:last-child {
    width: 82px;
}
```
